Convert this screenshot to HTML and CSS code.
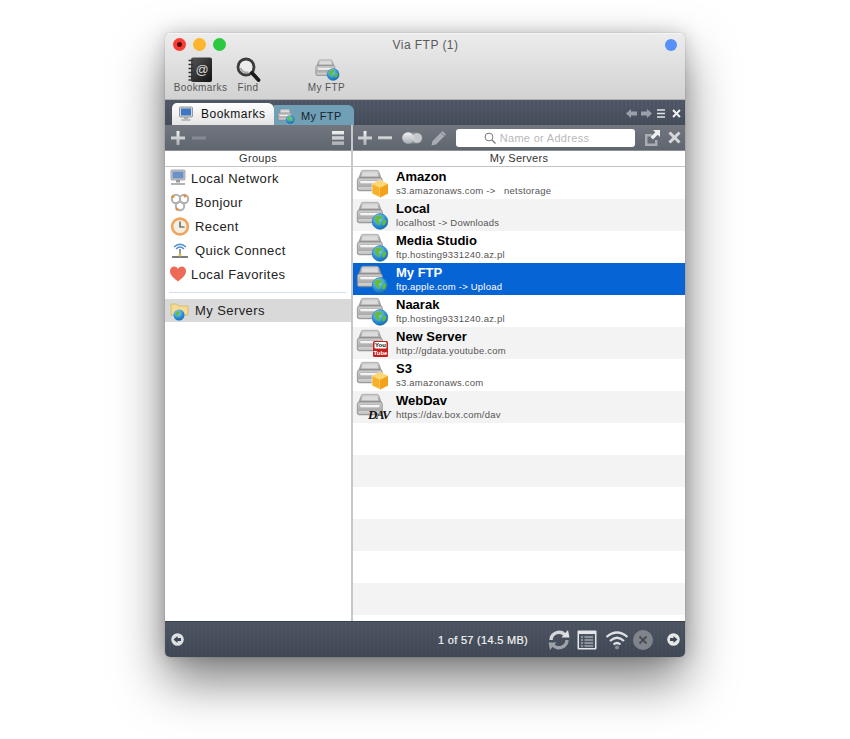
FILE: index.html
```html
<!DOCTYPE html>
<html lang="en">
<head>
<meta charset="utf-8">
<title>Via FTP (1)</title>
<link rel="stylesheet" href="styles.css">
</head>
<body>
<svg class="defs" width="0" height="0" aria-hidden="true">
  <defs>
    <linearGradient id="gSrvTop" x1="0" y1="0" x2="0" y2="1"><stop offset="0" stop-color="#d4d4d4"/><stop offset="1" stop-color="#8e8e8e"/></linearGradient>
    <linearGradient id="gSrvBody" x1="0" y1="0" x2="0" y2="1"><stop offset="0" stop-color="#cfcfcf"/><stop offset="1" stop-color="#9a9a9a"/></linearGradient>
    <radialGradient id="gGlobe" cx=".4" cy=".3" r=".8"><stop offset="0" stop-color="#9bdcf8"/><stop offset=".55" stop-color="#2a92da"/><stop offset="1" stop-color="#125fa6"/></radialGradient>
    <linearGradient id="gDark" x1="0" y1="0" x2="0" y2="1"><stop offset="0" stop-color="#f2f2f2"/><stop offset="1" stop-color="#a9adb2"/></linearGradient>
    <linearGradient id="gBook" x1="0" y1="0" x2="1" y2="1"><stop offset="0" stop-color="#555"/><stop offset="1" stop-color="#111"/></linearGradient>
    <symbol id="srv" viewBox="0 0 34 30">
      <path d="M6 4 Q6.500 2.300 8 2.300 H22 Q23.500 2.300 24 4 L26.500 11 H3.500Z" fill="url(#gSrvTop)" stroke="#8f8f8f" stroke-width=".6"/>
      <path d="M7.800 4.200 H22.200 L23.600 8.500 H6.400Z" fill="#dcdcdc"/>
      <rect x="2.300" y="10" width="25" height="12.800" rx="2" fill="url(#gSrvBody)" stroke="#858585" stroke-width=".7"/>
      <rect x="4.800" y="12.500" width="20" height="3.200" rx="1" fill="#f4f4f4" stroke="#9a9a9a" stroke-width=".5"/>
      <rect x="3.300" y="19" width="23" height="2.800" fill="#efefef" opacity=".55"/>
    </symbol>
    <symbol id="globe" viewBox="0 0 34 30">
      <circle cx="25" cy="21.500" r="7.900" fill="url(#gGlobe)" stroke="#17609c" stroke-width=".4"/>
      <path d="M19.500 17.500 q3 -3 7 -2 q1.500 2.500 -.5 3.500 q-2.500 0 -2 2.700 q2 1 .8 3.300 q-1.800 .8 -2.300 -1.500 q-3 -1.500 -3 -6Z M27 20 q2.800 -1.200 4 .3 q.5 3.400 -2.300 5.500 q-2.200 -1 -1.200 -2.800 q.7 -1.500 -.5 -3Z" fill="#63bd3c"/>
    </symbol>
    <symbol id="box" viewBox="0 0 34 30">
      <path d="M25 12 L33 16 V25.500 L25 29.500 L17 25.500 V16Z" fill="#f8b02a" stroke="#fff" stroke-width=".5"/>
      <path d="M17 16 L25 20 L33 16 L25 12Z" fill="#fcd778"/>
      <path d="M25 20 V29.500" stroke="#fde3a0" stroke-width=".8"/>
      <path d="M25 20 L33 16 V25.500 L25 29.500Z" fill="#f3a31a"/>
    </symbol>
  </defs>
</svg>

<main class="window">
  <header class="chrome">
    <div class="titlebar">
      <div class="lights">
        <span class="light red"></span>
        <span class="light yellow"></span>
        <span class="light green"></span>
      </div>
      <div class="title">Via FTP (1)</div>
      <span class="blue-dot"></span>
    </div>
    <div class="toolbar">
      <div class="tool tool-book">
        <svg class="tool-ic" width="25" height="25" viewBox="0 0 25 25">
          <rect x="3" y="0.500" width="21" height="24.500" rx="2" fill="url(#gBook)"/>
          <text class="at" x="14" y="17">@</text>
          <path d="M.5 3.500h5M.5 7.500h5M.5 11.500h5M.5 15.500h5M.5 19.500h5M.5 23h5" stroke="#333" stroke-width="1.500"/>
        </svg>
        <span class="tool-label">Bookmarks</span>
      </div>
      <div class="tool tool-find">
        <svg class="tool-ic" width="25" height="25" viewBox="0 0 25 25">
          <circle cx="10" cy="10" r="8" fill="#ececec" stroke="#3c3c3c" stroke-width="2.800"/>
          <path d="M4.500 11 q2 5 8 4.500" stroke="#aaa" stroke-width="2" fill="none"/>
          <path d="M16 16 L22.500 23" stroke="#1c1c1c" stroke-width="3.800" stroke-linecap="round"/>
        </svg>
        <span class="tool-label">Find</span>
      </div>
      <div class="tool tool-ftp">
        <div class="tool-ic tool-ic-small">
          <svg width="26" height="23" viewBox="0 0 34 30"><use href="#srv"/><use href="#globe"/></svg>
        </div>
        <span class="tool-label">My FTP</span>
      </div>
    </div>
  </header>

  <nav class="tabbar">
    <div class="tab tab-active">
      <svg width="16" height="17" viewBox="0 0 16 17">
        <rect x="1.500" y="1" width="13" height="10" rx="1" fill="#d5d5d5" stroke="#777" stroke-width=".7"/>
        <rect x="3" y="2.500" width="10" height="7" fill="#3d76c4"/>
        <path d="M6 11h4v2H6z" fill="#aaa"/><rect x="3.500" y="13" width="9" height="2" fill="#bbb"/>
      </svg>
      <span>Bookmarks</span>
    </div>
    <div class="tab tab-other">
      <svg width="18" height="16" viewBox="0 0 34 30"><use href="#srv"/><use href="#globe"/></svg>
      <span>My FTP</span>
    </div>
    <div class="tab-actions">
      <svg width="11" height="9" viewBox="0 0 11 9"><path d="M0 4.500 L5 0 V2.500 H11 V6.500 H5 V9Z" fill="#9aa0a8"/></svg>
      <svg width="11" height="9" viewBox="0 0 11 9"><path d="M11 4.500 L6 0 V2.500 H0 V6.500 H6 V9Z" fill="#9aa0a8"/></svg>
      <svg class="ta-menu" width="9" height="9" viewBox="0 0 9 9"><path d="M0 1h8M0 4.500h8M0 8h8" stroke="#e2e4e6" stroke-width="1.700"/></svg>
      <svg class="ta-x" width="9" height="9" viewBox="0 0 9 9"><path d="M1 1 L8 8M8 1 L1 8" stroke="#f2f2f2" stroke-width="2"/></svg>
    </div>
  </nav>

  <div class="panes">
    <section class="pane pane-left">
      <div class="strip strip-left">
        <svg class="ic-plus" width="14" height="14" viewBox="0 0 14 14"><path d="M5.500 0h3v5.500H14v3H8.500V14h-3V8.500H0v-3h5.500z" fill="url(#gDark)"/></svg>
        <svg class="ic-minus" width="14" height="4" viewBox="0 0 14 4"><rect width="14" height="3" y=".5" fill="#868b93"/></svg>
        <svg class="ic-menu" width="12" height="14" viewBox="0 0 12 14"><path d="M0 0h12v3.500H0zM0 5.200h12v3.500H0zM0 10.400h12v3.500H0z" fill="url(#gDark)"/></svg>
      </div>
      <div class="col-head">Groups</div>
      <ul class="groups">
        <li class="group">
          <svg width="16" height="18" viewBox="0 0 16 18"><rect x="1" y="1" width="14" height="10" rx="1" fill="#ccc" stroke="#888" stroke-width=".7"/><rect x="2.500" y="2.500" width="11" height="7" fill="#6a92c4"/><rect x="6" y="11" width="4" height="2.500" fill="#999"/><path d="M1 15h14" stroke="#999" stroke-width="1.500"/></svg>
          <span>Local Network</span>
        </li>
        <li class="group">
          <svg width="20" height="19" viewBox="0 0 20 19"><g fill="none" stroke="#b0b0b0" stroke-width="2"><circle cx="6" cy="6" r="4.200"/><circle cx="14" cy="6" r="4.200"/><circle cx="10" cy="13" r="4.200"/></g><circle cx="3" cy="3.500" r="1.500" fill="#f08a2c"/><circle cx="15" cy="3" r="1.500" fill="#f08a2c"/><circle cx="7" cy="16" r="1.500" fill="#f08a2c"/></svg>
          <span>Bonjour</span>
        </li>
        <li class="group">
          <svg width="20" height="19" viewBox="0 0 20 19"><circle cx="10" cy="9.500" r="7.900" fill="#f1efe3" stroke="#f2a35a" stroke-width="2.600"/><path d="M10 4.500V10H14.500" stroke="#444" stroke-width="1.200" fill="none"/></svg>
          <span>Recent</span>
        </li>
        <li class="group">
          <svg width="20" height="19" viewBox="0 0 20 19"><g fill="none" stroke="#4f8fd0" stroke-width="1.300"><path d="M4 6 Q10 .5 16 6"/><path d="M6 8 Q10 4 14 8"/></g><path d="M10 8V15" stroke="#777" stroke-width="1.500"/><path d="M2 16h16" stroke="#333" stroke-width="1.300"/><circle cx="10" cy="14" r="1.500" fill="#e3bf45"/></svg>
          <span>Quick Connect</span>
        </li>
        <li class="group">
          <svg width="16" height="16" viewBox="0 0 16 16"><path d="M8 15.500 C3 11.500 0 8.800 0 5 C0 2 2.200 .5 4.200 .5 C6 .5 7.300 1.500 8 3 C8.700 1.500 10 .5 11.800 .5 C13.800 .5 16 2 16 5 C16 8.800 13 11.500 8 15.500Z" fill="#ee6a58"/></svg>
          <span>Local Favorites</span>
        </li>
        <li class="group-sep"></li>
        <li class="group group-sel">
          <svg width="20" height="20" viewBox="0 0 20 20"><path d="M1 3h6l1.500 2H18v9H1z" fill="#f6dc92" stroke="#d3b263" stroke-width=".8"/><circle cx="9" cy="14" r="5.500" fill="url(#gGlobe)"/><path d="M6 11 q3 -1.500 4 0 q0 2 -1.500 2 q0 2 -1 3 q-2 -1.500 -1.500 -5Z" fill="#63bd3c"/></svg>
          <span>My Servers</span>
        </li>
      </ul>
    </section>

    <section class="pane pane-right">
      <div class="strip strip-right">
        <svg width="14" height="14" viewBox="0 0 14 14"><path d="M5.500 0h3v5.500H14v3H8.500V14h-3V8.500H0v-3h5.500z" fill="url(#gDark)"/></svg>
        <svg class="ic-m2" width="14" height="4" viewBox="0 0 14 4"><rect width="14" height="3" y=".5" fill="url(#gDark)"/></svg>
        <svg class="ic-toggle" width="21" height="12" viewBox="0 0 21 12"><rect x=".5" y=".5" width="20" height="11" rx="5.500" fill="#8d9198"/><circle cx="6" cy="6" r="5.800" fill="url(#gDark)"/><circle cx="15" cy="6" r="4.800" fill="#dcdcdc" opacity=".75"/></svg>
        <svg class="ic-pen" width="16" height="16" viewBox="0 0 16 16"><path d="M11.500 1 L15 4.500 L5 14.500 L0.500 15.500 L1.500 11Z" fill="#a9adb3"/><path d="M10 2.500 L13.500 6" stroke="#6b717b" stroke-width=".8"/></svg>
        <div class="search">
          <svg width="12" height="12" viewBox="0 0 12 12"><circle cx="5" cy="5" r="3.900" fill="none" stroke="#777" stroke-width="1"/><path d="M8 8 L11.500 11.500" stroke="#777" stroke-width="1.200"/></svg>
          <span>Name or Address</span>
        </div>
        <svg class="ic-ext" width="16" height="16" viewBox="0 0 16 16"><path d="M1 4h7v2.500H3.500v7H11V10h2.500v6H1z" fill="#a9adb2"/><path d="M9 0h7v7l-2.300-2.300L9 9.500 6.500 7l4.800-4.700z" fill="#f0f0f0"/></svg>
        <svg class="ic-x" width="13" height="13" viewBox="0 0 13 13"><path d="M1.500 1.500 L11.500 11.500M11.500 1.500 L1.500 11.500" stroke="#d5d7da" stroke-width="3"/></svg>
      </div>
      <div class="col-head">My Servers</div>
      <ul class="servers">
        <li class="server">
          <svg width="34" height="30" viewBox="0 0 34 30"><use href="#srv"/><use href="#box"/></svg>
          <div class="srv-text"><strong>Amazon</strong><small>s3.amazonaws.com -&gt; &nbsp; netstorage</small></div>
        </li>
        <li class="server">
          <svg width="34" height="30" viewBox="0 0 34 30"><use href="#srv"/><use href="#globe"/></svg>
          <div class="srv-text"><strong>Local</strong><small>localhost -&gt; Downloads</small></div>
        </li>
        <li class="server">
          <svg width="34" height="30" viewBox="0 0 34 30"><use href="#srv"/><use href="#globe"/></svg>
          <div class="srv-text"><strong>Media Studio</strong><small>ftp.hosting9331240.az.pl</small></div>
        </li>
        <li class="server server-sel">
          <svg width="34" height="30" viewBox="0 0 34 30"><use href="#srv"/><use href="#globe"/></svg>
          <div class="srv-text"><strong>My FTP</strong><small>ftp.apple.com -&gt; Upload</small></div>
        </li>
        <li class="server">
          <svg width="34" height="30" viewBox="0 0 34 30"><use href="#srv"/><use href="#globe"/></svg>
          <div class="srv-text"><strong>Naarak</strong><small>ftp.hosting9331240.az.pl</small></div>
        </li>
        <li class="server">
          <svg width="34" height="30" viewBox="0 0 34 30"><use href="#srv"/>
            <rect x="18" y="13" width="15" height="16" rx="1.500" fill="#c4201d"/>
            <rect x="19.500" y="14" width="12" height="6.500" rx="1" fill="#fff"/>
            <text class="yt yt-a" x="25.500" y="19.300">You</text>
            <text class="yt yt-b" x="25.500" y="27">Tube</text>
          </svg>
          <div class="srv-text"><strong>New Server</strong><small>http://gdata.youtube.com</small></div>
        </li>
        <li class="server">
          <svg width="34" height="30" viewBox="0 0 34 30"><use href="#srv"/><use href="#box"/></svg>
          <div class="srv-text"><strong>S3</strong><small>s3.amazonaws.com</small></div>
        </li>
        <li class="server">
          <svg width="34" height="30" viewBox="0 0 34 30"><use href="#srv"/>
            <text class="dav" x="13" y="27">DAV</text>
          </svg>
          <div class="srv-text"><strong>WebDav</strong><small>https://dav.box.com/dav</small></div>
        </li>
      </ul>
    </section>
  </div>

  <footer class="statusbar">
    <svg width="13" height="13" viewBox="0 0 13 13"><circle cx="6.500" cy="6.500" r="6.300" fill="#dfe0e2"/><path d="M2.500 6.500 L6.500 3 V5 H10 V8 H6.500 V10Z" fill="#3f4856"/></svg>
    <span class="status-text">1 of 57 (14.5 MB)</span>
    <svg class="st-sync" width="24" height="22" viewBox="0 0 24 22"><g fill="none" stroke-width="3.400"><path d="M4 11 A8 8 0 0 1 18 6" stroke="#d4d6da"/><path d="M20 11 A8 8 0 0 1 6 16" stroke="#9ea2a8"/></g><path d="M14.500 8.500 L22.500 8.500 L21 1Z" fill="#dfe1e4"/><path d="M9.500 13.500 L1.500 13.500 L3 21Z" fill="#9ea2a8"/></svg>
    <svg class="st-list" width="20" height="20" viewBox="0 0 20 20"><rect x=".5" y=".5" width="19" height="19" rx="1" fill="#e6e7e9"/><rect x="2" y="4" width="16" height="14" fill="#4c5563"/><path d="M4 7h2M4 10h2M4 13h2M4 16h2M7.500 7H16M7.500 10H16M7.500 13H16M7.500 16H16" stroke="#cdd0d4" stroke-width="1.200"/></svg>
    <svg class="st-wifi" width="24" height="20" viewBox="0 0 24 20"><g fill="none" stroke="#dfe1e4" stroke-width="2.200"><path d="M1.500 7 Q12 -2 22.500 7"/><path d="M5 11 Q12 4.500 19 11"/><path d="M8.500 14.500 Q12 11.500 15.500 14.500"/></g><circle cx="12" cy="17.500" r="2" fill="#8a8e94"/></svg>
    <svg class="st-stop" width="20" height="20" viewBox="0 0 20 20"><circle cx="10" cy="10" r="10" fill="#81858b"/><path d="M6.500 6.500 L13.500 13.500M13.500 6.500 L6.500 13.500" stroke="#474e59" stroke-width="2"/></svg>
    <svg class="st-next" width="13" height="13" viewBox="0 0 13 13"><circle cx="6.500" cy="6.500" r="6.300" fill="#e6e7e9"/><path d="M10.500 6.500 L6.500 3 V5 H3 V8 H6.500 V10Z" fill="#3f4856"/></svg>
  </footer>
</main>
</body>
</html>
```

FILE: styles.css
```css
* { box-sizing: border-box; }

html, body { margin: 0; padding: 0; height: 100%; background: #fff; overflow: hidden; }

body {
  padding: 33px 0 0 165px;
  font-family: "Liberation Sans", Arial, sans-serif;
  color: #222;
}

.defs { position: absolute; }

svg { display: block; flex: none; overflow: visible; }

ul { list-style: none; margin: 0; padding: 0; }

.window {
  width: 520px;
  height: 624px;
  display: flex;
  flex-direction: column;
  border-radius: 5px;
  overflow: hidden;
  box-shadow: 0 24px 50px rgba(0,0,0,.5), 0 0 18px rgba(0,0,0,.18), 0 0 1px rgba(0,0,0,.5);
}

/* title + toolbar */
.chrome {
  height: 67px;
  flex: none;
  background: linear-gradient(#ececec, #d2d2d2);
  border-top: 1px solid #f6f6f6;
  border-bottom: 1px solid #b0b0b0;
}

.titlebar {
  height: 21px;
  display: flex;
  align-items: center;
  padding: 0 8px;
}

.lights { display: flex; gap: 7px; }

.light { width: 13px; height: 13px; border-radius: 50%; }
.red { background: radial-gradient(circle, #5a0a08 0 2px, #fb3c36 3px); }
.yellow { background: #fdb52e; }
.green { background: #2ac93f; }

.title {
  flex: 1;
  text-align: center;
  font-size: 12px;
  letter-spacing: .45px;
  color: #5a5a5a;
  padding-right: 40px;
}

.blue-dot { width: 12px; height: 12px; border-radius: 50%; background: #5790f6; }

.toolbar { display: flex; align-items: flex-start; padding-left: 8px; }

.tool { display: flex; flex-direction: column; align-items: center; margin-top: 2px; }

.tool-ic { height: 25px; }
.tool-ic-small { padding-top: 1px; }

.tool-label { font-size: 10px; letter-spacing: .4px; color: #555; line-height: 12px; white-space: nowrap; }

.at { font-family: "Liberation Sans", Arial, sans-serif; font-size: 13px; fill: #d8d8d8; text-anchor: middle; }

.tool-book { width: 55px; }
.tool-find { width: 24px; margin-left: 8px; }
.tool-ftp { width: 37px; margin-left: 48px; }

/* tabs */
.tabbar {
  height: 25px;
  flex: none;
  display: flex;
  align-items: flex-end;
  padding-left: 7px;
  background:
    repeating-linear-gradient(90deg, rgba(255,255,255,.025) 0 2px, transparent 2px 4px),
    linear-gradient(#4f5766, #434b59);
}

.tab { display: flex; align-items: center; font-size: 12px; letter-spacing: .5px; }

.tab-active {
  width: 102px;
  height: 22px;
  background: linear-gradient(#fff, #e4e4e4);
  border-radius: 5px 6px 0 0;
  padding-left: 6px;
  gap: 7px;
  color: #111;
}

.tab-other {
  width: 80px;
  height: 20px;
  background: #719fb6;
  border-radius: 0 6px 0 0;
  padding-left: 3px;
  padding-top: 2px;
  gap: 6px;
  font-size: 11px;
  letter-spacing: .35px;
  color: #14222c;
}

.tab-actions {
  margin-left: auto;
  height: 25px;
  display: flex;
  align-items: center;
  gap: 4px;
  padding: 1px 4px 0 0;
}

.ta-menu { margin-left: 1px; }
.ta-x { margin-left: 2px; }

/* panes */
.panes { flex: 1; display: flex; min-height: 0; }

.pane { display: flex; flex-direction: column; min-width: 0; }

.pane-left { width: 186px; flex: none; }

.pane-right { flex: 1; border-left: 2px solid #c7c7c7; }

.strip {
  height: 26px;
  flex: none;
  display: flex;
  align-items: center;
  background: linear-gradient(#71767f, #60666f);
  border-bottom: 1px solid #8d9097;
}

.strip-left { padding: 0 7px 0 6px; }
.ic-minus { margin-left: 7px; }
.ic-menu { margin-left: auto; }

.strip-right { padding-left: 5px; }
.ic-m2 { margin-left: 6px; }
.ic-toggle { margin-left: 10px; }
.ic-pen { margin-left: 8px; }
.ic-ext { margin-left: 9px; }
.ic-x { margin-left: 8px; }

.search {
  width: 179px;
  height: 18px;
  margin-left: 9px;
  padding-right: 18px;
  background: #fff;
  border-radius: 3px;
  display: flex;
  align-items: center;
  justify-content: center;
  gap: 4px;
  font-size: 11px;
  letter-spacing: .3px;
  color: #b9b9b9;
}

.col-head {
  height: 16px;
  flex: none;
  text-align: center;
  font-size: 11px;
  letter-spacing: .3px;
  line-height: 15px;
  color: #333;
  background: #fff;
  border-bottom: 1px solid #c4c4c4;
}

/* groups */
.groups { flex: 1; background: #fff; }

.group {
  height: 24px;
  display: flex;
  align-items: center;
  padding: 0 0 2px 5px;
  font-size: 13px;
  letter-spacing: .42px;
  color: #222;
}

.group span { margin-left: 5px; }

.group-sep {
  height: 1px;
  margin: 5px 5px 6px 4px;
  background: #cfe0f2;
}

.group-sel { background: #d9d9d9; height: 23px; padding-bottom: 0; }

/* servers */
.servers {
  flex: 1;
  background: repeating-linear-gradient(#fff 0 32px, #f3f3f3 32px 64px);
}

.server {
  height: 32px;
  display: flex;
  align-items: center;
  padding-left: 2px;
  gap: 7px;
}

.srv-text { display: flex; flex-direction: column; }

.srv-text strong { font-size: 13px; line-height: 16px; color: #000; }

.srv-text small { font-size: 9.500px; line-height: 12px; color: #555; letter-spacing: .22px; white-space: nowrap; }

.server-sel { background: #0764d4; }
.server-sel strong, .server-sel small { color: #fff; }

.yt { font-family: "Liberation Sans", Arial, sans-serif; font-size: 6px; font-weight: 700; text-anchor: middle; }
.yt-a { fill: #111; }
.yt-b { fill: #fff; }

.dav { font-family: "Liberation Serif", serif; font-style: italic; font-weight: 700; font-size: 13px; fill: #111; letter-spacing: -1.500px; }

/* status */
.statusbar {
  height: 36px;
  flex: none;
  display: flex;
  align-items: center;
  padding: 0 5px 0 6px;
  background:
    repeating-linear-gradient(90deg, rgba(255,255,255,.025) 0 2px, transparent 2px 4px),
    linear-gradient(#4b5361, #3e4653);
  border-top: 1px solid #3a414d;
}

.status-text {
  margin-left: 254px;
  width: 107px;
  font-size: 11px;
  letter-spacing: .3px;
  color: #f2f2f2;
  -webkit-text-stroke: .2px #f2f2f2;
}

.st-sync { margin-left: 2px; }
.st-list { margin-left: 6px; }
.st-wifi { margin-left: 8px; }
.st-stop { margin-left: 4px; }
.st-next { margin-left: auto; }
```
